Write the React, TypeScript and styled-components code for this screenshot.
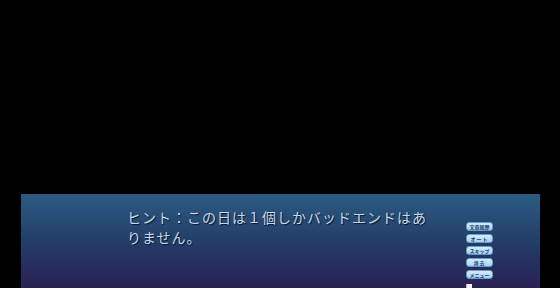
import React from "react";
import styled, { createGlobalStyle } from "styled-components";

const Global = createGlobalStyle`
  html, body {
    margin: 0;
    padding: 0;
    background: #000;
    overflow: hidden;
  }
`;

const Screen = styled.div`
  width: 560px;
  height: 288px;
  background: #000;
  padding-top: 194px;
  box-sizing: border-box;
  overflow: hidden;
`;

const MessageWindow = styled.div`
  margin-left: 21px;
  width: 519px;
  height: 110px;
  box-sizing: border-box;
  padding: 13px 0 0 106px;
  display: flex;
  background: linear-gradient(180deg, #2b5b82 0%, #23406a 40%, #28275a 75%, #2d1d4a 100%);
`;

const Message = styled.p`
  margin: 0;
  width: 302px;
  font-family: "Noto Sans CJK JP", "Noto Sans", sans-serif;
  font-size: 14px;
  line-height: 20px;
  letter-spacing: 1px;
  color: #c6d9e8;
  text-shadow: 1px 1px 1px rgba(5, 15, 35, 0.9);
`;

const Controls = styled.div`
  margin: 15px 0 0 37px;
  display: flex;
  flex-direction: column;
  gap: 3px;
`;

const ControlButton = styled.div`
  width: 27px;
  height: 9px;
  box-sizing: border-box;
  border-radius: 3px;
  background: linear-gradient(180deg, #d4ecfb 0%, #a6d2f0 100%);
  border: 1px solid #6a9cc8;
  display: flex;
  align-items: center;
  justify-content: center;
  font-family: "Noto Sans CJK JP", sans-serif;
  font-size: 5px;
  font-weight: 700;
  line-height: 1;
  color: #23406e;
  white-space: nowrap;
  letter-spacing: ${(p: { $spaced?: boolean }) => (p.$spaced ? "1px" : "0")};
`;

const Thumb = styled.div`
  margin-top: 2px;
  width: 5px;
  height: 5px;
  background: #f4eef2;
  border-left: 1px solid #d8b0c4;
`;

const buttons = [
  { label: "文章履歴" },
  { label: "オート", spaced: true },
  { label: "スキップ" },
  { label: "消去", spaced: true },
  { label: "メニュー" },
];

export default function App() {
  return (
    <>
      <Global />
      <Screen>
        <MessageWindow>
          <Message>ヒント：この日は１個しかバッドエンドはありません。</Message>
          <Controls>
            {buttons.map((b) => (
              <ControlButton key={b.label} $spaced={b.spaced}>
                {b.label}
              </ControlButton>
            ))}
            <Thumb />
          </Controls>
        </MessageWindow>
      </Screen>
    </>
  );
}
